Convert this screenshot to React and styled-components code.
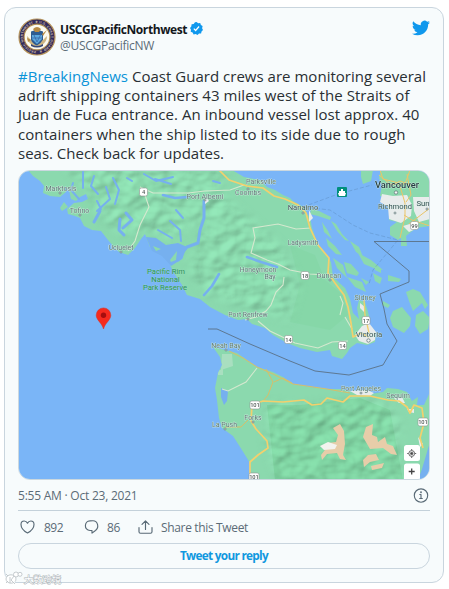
import React from "react";
import styled, { createGlobalStyle } from "styled-components";

const Global = createGlobalStyle`
  * { box-sizing: border-box; }
  body { margin: 0; background: #fff; overflow: hidden; }
`;

const Page = styled.main`
  position: relative;
  width: 449px;
  height: 589px;
  padding: 7px 5px 6px 4px;
  font-family: "Open Sans", "Noto Sans", sans-serif;
`;

const Card = styled.article`
  height: 576px;
  padding: 10px 13px 0;
  border: 1px solid #c9d5de;
  border-radius: 12px;
  background: #f7fbfc;
  color: #292f33;
`;

const Header = styled.header`
  display: flex;
  align-items: flex-start;
  height: 48px;
`;

const Seal = styled.svg`
  width: 38px;
  height: 38px;
  flex: none;
`;

const Author = styled.div`
  margin: 3px 0 0 4px;
  flex: 1;
`;

const NameRow = styled.div`
  display: flex;
  align-items: center;
  height: 17px;
  gap: 3px;
  color: #14181c;

  svg { margin-top: -2px; }
`;

const Line = styled.span`
  display: block;
  width: max-content;
  white-space: pre;
  font-size: ${(p) => p.$size || 15}px;
  line-height: ${(p) => p.$height || 19.2}px;
  font-weight: ${(p) => p.$weight || 400};
  letter-spacing: ${(p) => p.$track || 0}px;
  color: ${(p) => p.$color || "inherit"};
`;

const Bird = styled.svg`
  width: 18px;
  height: 18px;
  margin-top: 1px;
`;

const Message = styled.p`
  margin: 1px 0 0;
  height: 96px;
`;

const Hashtag = styled.span`
  color: #0a93d8;
`;

const MapFrame = styled.div`
  width: 412px;
  height: 310px;
  margin-top: 7px;
  border: 1px solid #cbd8df;
  border-radius: 12px;
  overflow: hidden;
`;

const MapArt = styled.svg`
  display: block;
  width: 412px;
  height: 310px;
  margin: -1px;
  font-family: Roboto, sans-serif;
`;

const Meta = styled.div`
  display: flex;
  align-items: center;
  justify-content: space-between;
  height: 31px;
  padding-top: 1px;
  border-bottom: 1px solid #c4d1da;
`;

const Actions = styled.div`
  display: flex;
  align-items: center;
  height: 32px;
  padding-top: 1px;
`;

const Action = styled.div`
  display: flex;
  align-items: center;
  gap: ${(p) => p.$gap}px;
  margin-left: ${(p) => p.$before}px;
`;

const Icon = styled.svg`
  width: ${(p) => p.$w || 16}px;
  height: 16px;
  fill: none;
  stroke: #596a76;
  stroke-width: 1.15;
  stroke-linecap: round;
  stroke-linejoin: round;
`;

const Reply = styled.button`
  display: flex;
  align-items: center;
  justify-content: center;
  width: 412px;
  height: 26px;
  padding: 0;
  border: 1px solid #c9d5de;
  border-radius: 13px;
  background: transparent;
  font-family: inherit;
`;

const Watermark = styled.svg`
  position: absolute;
  left: 4px;
  top: 569px;
  width: 62px;
  height: 19px;
`;

const messageLines = [
  ["adrift shipping containers 43 miles west of the Straits of", 391.5],
  ["Juan de Fuca entrance. An inbound vessel lost approx. 40", 401.5],
  ["containers when the ship listed to its side due to rough", 387.5],
  ["seas. Check back for updates.", 206],
];

/* Spreads a line's glyphs so that the text spans an exact width. */
function FitLine({ width, children, ...rest }) {
  const ref = React.useRef(null);
  const [track, setTrack] = React.useState(0);
  React.useLayoutEffect(() => {
    const el = ref.current;
    const measured = el.getBoundingClientRect().width;
    setTrack((t) => t + (width - measured) / el.textContent.length);
  }, [width]);
  return (
    <Line ref={ref} $track={track} {...rest}>
      {children}
    </Line>
  );
}

const island =
  "M28 170 33 176 40 181 44 186 43 193 50 196 60 197 66 192 65 186 69 190 71 199 76 201 80 197 86 194 88 199 82 202 74 203 67 209 68 214 75 216 80 218 84 226 92 230 101 231 108 240 114 247 119 252 128 255 135 248 141 239 145 234 150 247 158 250 168 250 171 244 178 245 181 249 184 247 183 258 178 262 172 260 170 265 174 273 182 285 187 295 200 299 210 307 225 315 238 320 247 319 252 324 265 328 273 335 287 343 300 348 317 352 330 350 332 356 342 359 347 353 350 348 357 343 367 345 375 342 376 333 368 327 370 320 368 312 365 302 359 300 357 308 359 319 353 313 350 299 345 288 333 277 331 262 325 253 318 245 312 228 310 217 307 214 305 208 300 205 293 201 290 198 283 195 275 190 267 187 260 180 244 177 232 170Z";
const mainland =
  "M381 170 379 178 382 185 380 196 388 197 390 210 389 220 397 222 390 227 390 235 398 240 401 238 401 246 407 246 406 236 416 228 430 226 430 170Z";
const peninsula =
  "M213 347 225 350 237 353 247 360 257 367 273 372 283 377 293 384 310 387 327 389 340 389 357 393 370 394 383 392 387 388 398 389 407 392 412 401 418 397 417 405 424 405 430 392 430 480 252 480 250 463 242 450 233 436 222 428 219 418 217 400 215 388 218 373 222 365 220 357Z";

const isles = [
  "M361 170 373 170 371 181 363 184 361 177Z",
  "M311 209 319 211 331 217 330 220 318 216 310 214Z",
  "M331 221 336 224 342 234 349 241 345 240 337 231Z",
  "M350 241 359 247 363 257 356 252Z",
  "M322 222 328 231 332 239 324 232Z",
  "M326 238 335 246 342 255 336 254 328 246Z",
  "M344 262 351 264 359 273 357 276 347 273Z",
  "M333 258 343 265 347 278 337 268Z",
  "M347 277 362 282 366 292 355 287Z",
  "M358 253 371 260 383 270 376 269 364 264Z",
  "M373 264 381 269 381 273 375 270Z",
  "M373 273 382 278 380 284 375 281Z",
  "M388 275 401 279 399 282 388 281Z",
  "M361 278 369 282 366 285Z",
  "M383 301 390 305 388 308 382 305Z",
  "M406 292 413 289 420 292 428 305 425 309 422 303 413 311 409 301Z",
  "M393 311 402 307 411 318 410 326 404 333 393 327 390 318Z",
  "M416 315 423 311 430 318 428 329 420 334 415 326Z",
  "M182 270 187 267 185 274 182 277Z",
  "M60 208 64 202 68 207 62 211Z",
];

const labels = [
  ["Marktosis", 61, 190.5, 7],
  ["Tofino", 79.5, 213, 7],
  ["Ucluelet", 121, 249.5, 7],
  ["Port Alberni", 205, 198.5, 7],
  ["Parksville", 261, 183.5, 7],
  ["Coombs", 248, 195, 7],
  ["Nanaimo", 303, 210, 7.6, 1],
  ["Ladysmith", 303, 245, 6.6],
  ["Honeymoon", 258, 272, 6.8],
  ["Bay", 270, 279, 6.8],
  ["Duncan", 329, 277.5, 7.2],
  ["Sidney", 365, 299.5, 7.2],
  ["Port Renfrew", 248, 316.5, 6.8],
  ["Victoria", 369, 337, 7.8, 1],
  ["Vancouver", 397, 188, 9.3, 2],
  ["Richmond", 395, 209, 7.6, 1],
  ["Sun", 423, 205.5, 7.8, 1],
  ["Neah Bay", 226, 348, 7],
  ["Forks", 253, 419.5, 7],
  ["La Push", 224.5, 426.500, 7],
  ["Port Angeles", 361, 391, 7],
  ["Sequim", 398, 397.5, 7],
];

const Shield = ({ x, y, n }) => {
  const w = n.length > 2 ? 10 : 8;
  return (
    <g>
      <rect x={x - w / 2} y={y - 4} width={w} height="8" rx="1.8" fill="#fff" stroke="#8d9691" strokeWidth=".6" />
      <text x={x} y={y + 2.1} fontSize="5.7" fontWeight="500" textAnchor="middle" fill="#515a58">{n}</text>
    </g>
  );
};

const Crosshair = () => (
  <g stroke="#666" fill="none" strokeWidth="1">
    <circle cx="411.7" cy="453.5" r="2.9" />
    <circle cx="411.7" cy="453.5" r="1.2" fill="#444" />
    <path d="M411.7 449v1.5M411.7 456.5v1.5M407.2 453.5h1.5M414.7 453.5h1.5" />
  </g>
);

function CoastMap() {
  return (
    <MapArt viewBox="18 170 412 310">
      <defs>
        <filter id="relief" x="0" y="0" width="100%" height="100%" colorInterpolationFilters="sRGB">
          <feTurbulence type="fractalNoise" baseFrequency=".055 .075" numOctaves="2" seed="8" />
          <feColorMatrix values="0 0 0 0 0 0 0 0 0 0 0 0 0 0 0 1 0 0 0 0" />
          <feDiffuseLighting surfaceScale="3" diffuseConstant="1.2" lightingColor="#8bdcae">
            <feDistantLight azimuth="225" elevation="57" />
          </feDiffuseLighting>
        </filter>
        <clipPath id="land"><path d={island + peninsula} /></clipPath>
        <filter id="feather"><feGaussianBlur stdDeviation="5" /></filter>
        <mask id="hillMask">
          <g fill="#fff" filter="url(#feather)">
            <path d="M65 165H232L218 185 235 205 255 222 285 250 300 285 290 320 250 310 205 292 188 268 205 220 170 240 145 232 125 235 100 218 85 190Z" />
            <path d="M268 402 300 407 350 399 390 405 400 425 403 485H280L265 440Z" />
          </g>
        </mask>
        <filter id="soft"><feGaussianBlur stdDeviation=".45" /></filter>
        <filter id="labelSoft"><feGaussianBlur stdDeviation=".2" /></filter>
      </defs>
      <rect x="18" y="170" width="412" height="310" fill="#7ab5f7" />
      <g filter="url(#soft)">
        <path d={island + mainland + peninsula} fill="#8bd9ae" />
        <g clipPath="url(#land)">
          <path d="M290 245 315 255 325 280 343 295 348 315 330 330 290 322 300 285Z" fill="#86d7a8" />
          <path d="M267 405 300 405 360 398 390 410 403 480 275 480Z" fill="#7bd09d" />
          <g mask="url(#hillMask)">
            <rect x="18" y="170" width="412" height="310" filter="url(#relief)" opacity=".4" />
          </g>
          <path d="M222 354h10l1 12-12 4zM217 371l6-2 0 6h-5z" fill="#a9dfc0" />
        </g>
        <g fill="#8bd9ae">{isles.map((d) => <path key={d} d={d} />)}</g>
        <g fill="none" stroke="#76b0ef" strokeLinecap="round" strokeLinejoin="round">
          <path strokeWidth="3" d="M204 201V218L200 230 198 243 187 247 181 254M100 211 94 222M120 219 119 230 124 235M126 213 132 220 123 228" />
          <path strokeWidth="2.6" d="M247 257 261 262 277 267M219 274 212 286 204 295M163 195 175 198 188 197" />
          <path strokeWidth="2" d="M73 183 71 190 79 199M83 172 83 188M94 176 91 186 98 194M106 187 110 199 97 211M113 178 119 190 115 204M127 178 132 181M144 174 156 181 173 177M155 179 171 184M170 221 180 230 181 241M176 210 183 218M158 230 172 238M213 181 220 183M97 201 101 209" />
        </g>
        <g fill="#76b0ef">
          <path d="M221 388l7 3-1 10-3 4-3-8zM146 237l10 1 10 7 12-2 9 4-5 12-11 7-9-10-10-5z" />
          <path d="M422 469 427 452 430 442 430 480 418 480Z" />
        </g>
        <g fill="#8bd9ae"><path d="M170 260l7-9-1 9-5 2zM153 246l8 3-5 2z" /></g>
        <g fill="#e8ecec">
          <path d="M382 194 393 196 407 195 412 205 411 216 401 223 389 219 388 207 380 202ZM413 197h17v22l-11 3-5-11ZM403 226l10-3 5 5-9 4Z" />
          <path d="M355 335 362 326 369 323 376 332 375 340 368 344 359 341ZM360 303l5 4-1 5-4-4ZM350 391 357 395 370 396 374 393 367 390ZM394 398 402 397 405 403 399 403ZM407 409 414 409 414 413 409 412ZM418 437 423 444 420 447ZM205 196 209 201 205 204ZM309 210 313 218 309 222Z" />
        </g>
        <g fill="none" stroke="#d5e8cf" strokeWidth="1.1">
          <path d="M18 184M140 187 153 193 188 193 205 191 230 190 244 185M128 251 135 241 140 225 149 207 143 189M290 270 278 264 267 260 251 253 255 238 253 228 278 224 296 229 311 228M284 277 283 285 276 292 271 305 266 311 256 317 245 320M222 389 228 391 246 382 257 368M258 321 270 331 295 343 318 348 332 342 348 341M340 296 343 303 340 315M345 317 352 329M290 270 310 274 325 275" />
        </g>
        <g fill="none" stroke="#f3d06d" strokeWidth="1.7" strokeLinejoin="round">
          <path d="M218 169 229 180 247 186 263 188 274 196 285 199 298 205 306 213 310 228 318 245 329 258 328 273 335 283 344 295 348 307 351 323 353 337 361 333 369 337" />
          <path d="M250 480V462L258 455 268 448 267 441 256 429 251 421 252 405 263 401 283 402 304 400 312 405 321 404 327 398 343 402 350 396 370 396 388 400 399 401 407 407 410 413 414 405 422 408 424 423 420 438 423 448" />
          <path d="M364 300 365 315 369 333" strokeWidth="1.3" />
        </g>
        <g fill="none" stroke="#d8be69" strokeWidth="1">
          <path d="M229 351 243 358 257 367 273 374 293 384 327 389 350 393M266 369 273 382 268 395 264 400M274 382 283 378 292 383M225 427 241 427 248 420" />
          <path stroke="#ebc568" d="M380 170 383 179 399 183 405 203 405 217 400 238M379 175 390 184 405 184 410 170M389 187 400 181 413 186M404 215 412 220 430 226M407 174 411 195 406 202M409 224 430 208" />
        </g>
        <g fill="#e7cda9">
          <path d="M333 428 340 424 344 431 345 444 343 455 346 460 340 459 337 453 327 454 322 460 321 455 328 446 320 447 327 443 336 442 338 435Z" />
          <path d="M366 427 373 424 372 435 377 437 378 442 385 437 387 444 393 446 397 455 391 454 383 448 370 449 363 437Z" />
          <path d="M368 455 376 454 379 460 370 462 364 467 363 460ZM371 466 384 463 382 468 372 470Z" />
        </g>
        <path d="M320 446 328 442 337 445 335 449 324 450Z" fill="#f3f3ef" />
        <g fill="none" stroke="#5785b5" strokeWidth=".6" opacity=".65">
          <path d="M303 207 338 194 372 185" strokeDasharray="4 2" />
          <path d="M304 207 330 210 353 225 370 233 398 240 373 270 369 284" strokeDasharray="4 2" />
        </g>
      </g>
      <path d="M430 241.5H374L409 271V282L380 294 384 309 387 324 397 341 383 365 349 375 315 371 290 361 250 344 217 329H208" fill="none" stroke="#5a7086" strokeWidth=".9" />
      <g filter="url(#soft)">
        <rect x="337" y="187" width="10" height="10" rx="1" fill="#008f7b" />
        <path d="M341 189h2v2h2v2h1l-1 3h-6l-1-3h1v-2h2z" fill="#fff" />
      </g>
      <g filter="url(#labelSoft)">
        <Shield x={143.5} y={192} n="4" />
        <Shield x={305} y={275.5} n="18" />
        <Shield x={414.5} y={225.5} n="99" />
        <Shield x={366} y={320.5} n="17" />
        <Shield x={288.5} y={339.5} n="14" />
        <Shield x={342.5} y={345.5} n="14" />
        <Shield x={255} y={405} n="101" />
        <Shield x={423} y={422} n="101" />
        <Shield x={254} y={477} n="101" />
      </g>
      <g fill="#f4f7f6" stroke="#63797b" strokeWidth=".8">
        {[[60, 193], [80, 215], [121, 252], [205, 200], [248, 189], [303, 213], [330, 280], [396, 192.5], [395, 213], [427, 209], [368.5, 340.5], [226, 350], [225, 429], [253, 422], [248, 319], [361, 393]].map(([x, y], i) => (
          <circle key={i} cx={x} cy={y} r={i === 7 || i === 10 ? 1.7 : 1} />
        ))}
      </g>
      <g textAnchor="middle" stroke="#d8eee5" strokeWidth=".7" paintOrder="stroke" strokeLinejoin="round" filter="url(#labelSoft)">
        {labels.map(([t, x, y, size, tone = 0]) => (
          <text key={t} x={x} y={y} fontSize={size} fill={["#5c7874", "#3d5558", "#253d42"][tone]} fontWeight={tone === 2 ? 500 : 400}>{t}</text>
        ))}
      </g>
      <g textAnchor="middle" fontSize="7.6" fill="#269159" stroke="#a9dfc5" strokeWidth=".4" paintOrder="stroke">
        <text x="166" y="273.5">Pacific Rim</text>
        <text x="165.5" y="281.500">National</text>
        <text x="165" y="289.500">Park Reserve</text>
      </g>
      <path d="M103.5 329C102 323 96.2 320 96.2 315.2a7.3 7.3 0 0 1 14.6 0C110.8 320 105 323 103.5 329Z" fill="#f52a1e" stroke="#d9301f" strokeWidth=".5" />
      <circle cx="103.5" cy="315.2" r="2.7" fill="#a50e0e" />
      <rect x="404" y="445" width="16" height="16" rx="2.5" fill="#fff" />
      <path d="M404 480V466a2.500 2.500 0 0 1 2.500-2.500h11a2.500 2.500 0 0 1 2.500 2.500v14Z" fill="#fff" />
      <Crosshair />
      <path d="M408.7 471.5h6M411.7 468.5v6" stroke="#444" strokeWidth="1.3" />
    </MapArt>
  );
}

function CoastGuardSeal() {
  return (
    <Seal viewBox="0 0 38 38" aria-label="Coast Guard seal">
      <defs><path id="sealRing" d="M18.900 33a14 14 0 1 1 .2 0" /></defs>
      <circle cx="19" cy="19" r="18" fill="#332b5b" stroke="#b5935b" strokeWidth="1.2" />
      <text fontSize="3.300" fontWeight="700" fill="#cbbfae" fontFamily="Liberation Sans, sans-serif">
        <textPath href="#sealRing" startOffset="1" textLength="84">PACIFIC NORTHWEST ★ U.S. COAST GUARD ★</textPath>
      </text>
      <circle cx="19" cy="19" r="12.9" fill="#fbfaf0" stroke="#af8d50" strokeWidth="1.1" />
      <path d="M9 18c0 4 2 7 5 9l5 2 5-2c3-2 5-5 5-9l-4 4H13z" fill="#cdb581" />
      <path d="M13 13.500q6-3 12 0v8q-2 4-6 6-5-2-6-6z" fill="#2e5c91" />
      <path d="M14 17h10v4l-5 5-5-5z" fill="#5ca9df" />
      <path d="M16 17l3 7 4-8M14 20h10" stroke="#3866a4" strokeWidth=".8" fill="none" />
      <path d="M15 11q4-4 8 0l-2 3h-4zM9 20l4 2-3 2zM29 12l-5 4 1 2z" fill="#b78b45" />
      <path d="M13 26q6 4 12 0v2q-6 3-12 0z" fill="#344776" />
    </Seal>
  );
}

export default function App() {
  const muted = "#5b6b77";
  return (
    <Page>
      <Global />
      <Card>
        <Header>
          <CoastGuardSeal />
          <Author>
            <NameRow>
              <FitLine width={127} $size={12} $height={17} $weight={700}>USCGPacificNorthwest</FitLine>
              <svg width="13" height="13" viewBox="0 0 13 13" aria-label="Verified">
                <path d="M6.5 0 8.2 1.2 10.2 1 10.9 3 12.6 4.1 12.1 6.2 13 8 11.5 9.4 11.1 11.4 9 11.6 7.5 13 5.7 12 3.6 12.4 2.6 10.6.7 9.8 1 7.7 0 6 1.3 4.4 1.6 2.3 3.7 2 5 .3Z" fill="#1098ed" />
                <path d="m3.8 6.7 1.8 1.8 3.5-4" fill="none" stroke="#fff" strokeWidth="1.2" />
              </svg>
            </NameRow>
            <FitLine width={94} $size={12} $height={15} $color={muted}>@USCGPacificNW</FitLine>
          </Author>
          <Bird viewBox="0 0 24 24" fill="#1098ed" aria-label="Twitter" overflow="visible">
            <path d="M23.950 4.570a10 10 0 0 1-2.820.780 4.960 4.960 0 0 0 2.160-2.730c-.950.560-2 .960-3.120 1.190a4.920 4.920 0 0 0-8.380 4.480C7.690 8.100 4.070 6.130 1.640 3.160a4.930 4.930 0 0 0 1.520 6.570 4.900 4.900 0 0 1-2.230-.610v.060a4.920 4.920 0 0 0 3.950 4.830 5 5 0 0 1-2.210.080 4.940 4.940 0 0 0 4.600 3.420A9.870 9.870 0 0 1 0 19.540a14 14 0 0 0 7.550 2.210c9.050 0 14-7.500 14-13.980 0-.210 0-.420-.020-.630a9.940 9.940 0 0 0 2.420-2.570Z" />
          </Bird>
        </Header>
        <Message>
          <FitLine width={408}><Hashtag>#BreakingNews</Hashtag> Coast Guard crews are monitoring several</FitLine>
          {messageLines.map(([text, width]) => <FitLine key={text} width={width}>{text}</FitLine>)}
        </Message>
        <MapFrame><CoastMap /></MapFrame>
        <Meta>
          <FitLine width={119.5} $size={12} $color={muted}>5:55 AM · Oct 23, 2021</FitLine>
          <Icon viewBox="0 0 16 16" $w={17}>
            <circle cx="7.5" cy="7.500" r="6.7" /><path d="M7.5 6.500v4M6.300 6.500h1.200M6.200 10.500h2.600" /><circle cx="7.500" cy="4.200" r=".35" fill="#596a76" />
          </Icon>
        </Meta>
        <Actions>
          <Action $before={2} $gap={8}>
            <Icon viewBox="0 0 16 16"><path d="M7.500 14C4.500 12.300 1 8.700 1 5.400 1 3.300 2.400 2 4.200 2c1.500 0 2.600.8 3.300 2.200C8.200 2.800 9.300 2 10.800 2 12.600 2 14 3.300 14 5.400c0 3.300-3.500 6.900-6.500 8.600Z" /></Icon>
            <FitLine width={19} $size={12} $color={muted}>892</FitLine>
          </Action>
          <Action $before={21} $gap={7}>
            <Icon viewBox="0 0 16 16"><path d="M8 11.500v2.600l3.500-2.600C15.700 8.200 13.500 1.800 9 1.800H6C0 1.800-.3 11.500 6 11.500Z" /></Icon>
            <FitLine width={13} $size={12} $color={muted}>86</FitLine>
          </Action>
          <Action $before={18} $gap={7}>
            <Icon viewBox="0 0 16 16"><path d="M1 8.500v4.200q0 1.500 1.500 1.500h10q1.500 0 1.500-1.500V8.500M7.500 10.500V2M4 5.300 7.500 1.800 11 5.300" /></Icon>
            <FitLine width={87} $size={12} $color={muted}>Share this Tweet</FitLine>
          </Action>
        </Actions>
        <Reply type="button"><FitLine width={88} $size={11.8} $weight={700} $color="#1098df">Tweet your reply</FitLine></Reply>
      </Card>
      <Watermark viewBox="0 0 62 19" aria-hidden="true">
        <g fill="#fff" stroke="#b7bfc3" strokeWidth=".8">
          <ellipse cx="7" cy="10" rx="5" ry="4.200" /><circle cx="12" cy="5.500" r="2.500" /><circle cx="16" cy="5.300" r="2" />
          <path d="M6 8v6M10 7l-3 4 4 4M2 5l2 2M2 14l2-2" />
        </g>
        <text x="20" y="13.500" fontSize="9.300" fontFamily="Noto Sans CJK SC, sans-serif" fill="#fff" stroke="#aeb6ba" strokeWidth="1" paintOrder="stroke">大数跨境</text>
      </Watermark>
    </Page>
  );
}
